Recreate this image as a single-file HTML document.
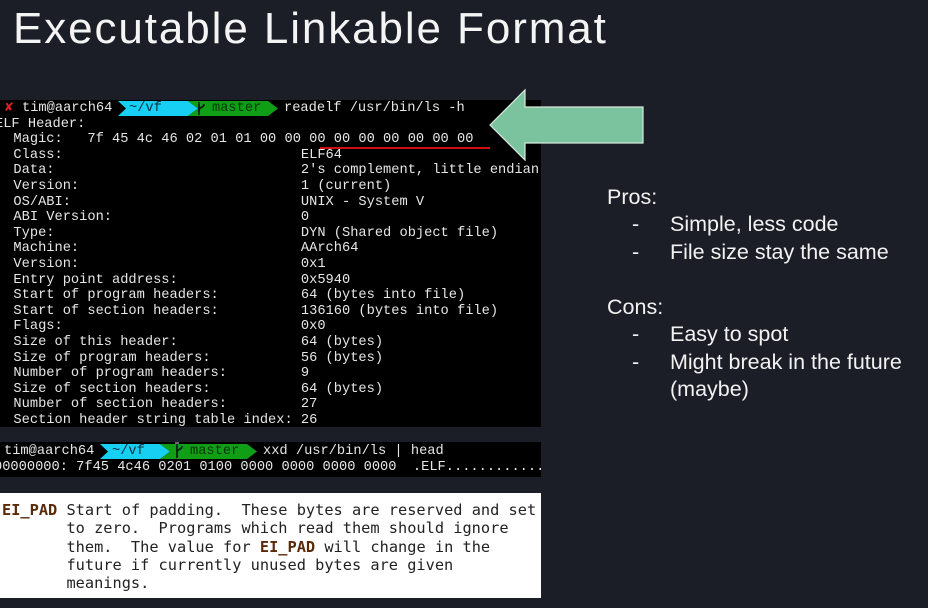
<!DOCTYPE html>
<html><head><meta charset="utf-8"><style>
*{margin:0;padding:0;box-sizing:border-box}
body{width:928px;height:608px;background:#1b1e27;position:relative;overflow:hidden;font-family:"Liberation Sans",sans-serif;color:#fff}
.title{position:absolute;left:13px;top:4px;font-size:44px;font-weight:normal;letter-spacing:1.9px;color:#f4f4f4;white-space:nowrap}
.term{position:absolute;background:#000;font-family:"Liberation Mono",monospace;font-size:13.7px;color:#e6e6e6;overflow:hidden}
.ln{position:absolute;left:0;height:15.6px;line-height:15.6px;white-space:pre}
.man{position:absolute;left:0;top:493px;width:541px;height:105px;background:#fff;font-family:"DejaVu Sans Mono",monospace;font-size:15.3px;color:#222;}
.man div{position:absolute;white-space:pre;line-height:18.3px}
b.r{color:#5a2a08}
.side{position:absolute;left:607px;font-size:21.5px;color:#f2f2f2;white-space:nowrap;line-height:27.5px}
</style></head><body>
<div class="title">Executable Linkable Format</div>

<div class="term" style="left:0;top:100px;width:541px;height:327px">
 <div style="position:absolute;left:118px;top:1px;width:80px;height:15px;background:#16cff2;clip-path:polygon(0 0,70px 0,80px 7.5px,70px 15px,0 15px,8px 7.5px)"></div>
 <div style="position:absolute;left:188px;top:1px;width:90px;height:15px;background:#0f9e16;clip-path:polygon(0 0,80px 0,90px 7.5px,80px 15px,0 15px,10px 7.5px)"></div>
 <div class="ln" style="top:1px;left:5px;color:#e02020">✘</div>
 <div class="ln" style="top:1px;left:22px">tim@aarch64</div>
 <div class="ln" style="top:1px;left:129px;color:#0a3040">~/vf</div>
 <div class="ln" style="top:1px;left:212px;color:#063a08">master</div>
 <div class="ln" style="top:1px;left:284px">readelf /usr/bin/ls -h</div>
 <svg style="position:absolute;left:196px;top:2px" width="10" height="13" viewBox="0 0 10 13"><path d="M3 0V13M3 8C3 5 8 6 8 2" stroke="#111" stroke-width="1.6" fill="none"/></svg>
 <div class="ln" style="top:16.6px;left:-5px">ELF Header:</div>
 <div class="ln" style="top:32.2px;left:-3px">  Magic:   7f 45 4c 46 02 01 01 00 00 00 00 00 00 00 00 00</div>
 <div style="position:absolute;left:320px;top:47px;width:170px;height:1.5px;background:#d01010"></div>
 <div class="ln" style="top:47.8px;left:-3px">  Class:                             ELF64
  Data:                              2's complement, little endian
  Version:                           1 (current)
  OS/ABI:                            UNIX - System V
  ABI Version:                       0
  Type:                              DYN (Shared object file)
  Machine:                           AArch64
  Version:                           0x1
  Entry point address:               0x5940
  Start of program headers:          64 (bytes into file)
  Start of section headers:          136160 (bytes into file)
  Flags:                             0x0
  Size of this header:               64 (bytes)
  Size of program headers:           56 (bytes)
  Number of program headers:         9
  Size of section headers:           64 (bytes)
  Number of section headers:         27
  Section header string table index: 26</div>
</div>

<svg style="position:absolute;left:488px;top:88px" width="158" height="74" viewBox="488 88 158 74"><path d="M490 125 L525 90 L525 107 L643 107 L643 143 L525 143 L525 160 Z" fill="#7bc39e" stroke="#d8e8de" stroke-width="1.2"/></svg>

<div class="term" style="left:0;top:442px;width:541px;height:35px">
 <div style="position:absolute;left:100px;top:2px;width:70px;height:15px;background:#16cff2;clip-path:polygon(0 0,60px 0,70px 7.5px,60px 15px,0 15px,8px 7.5px)"></div>
 <div style="position:absolute;left:160px;top:2px;width:97px;height:15px;background:#0f9e16;clip-path:polygon(0 0,87px 0,97px 7.5px,87px 15px,0 15px,10px 7.5px)"></div>
 <div class="ln" style="top:2px;left:4px">tim@aarch64</div>
 <div class="ln" style="top:2px;left:112px;color:#0a3040">~/vf</div>
 <div class="ln" style="top:2px;left:190px;color:#063a08">master</div>
 <div class="ln" style="top:2px;left:263px">xxd /usr/bin/ls | head</div>
 <svg style="position:absolute;left:174px;top:0px" width="10" height="16" viewBox="0 0 10 16"><path d="M3 2V16M3 10C3 7 8 8 8 4" stroke="#111" stroke-width="1.6" fill="none"/><path d="M1 1H5" stroke="#ccc"/></svg>
 <div class="ln" style="top:17.6px;left:-6px">00000000: 7f45 4c46 0201 0100 0000 0000 0000 0000  .ELF............</div>
</div>

<div class="man">
 <div style="left:2px;top:8px"><b class="r">EI_PAD</b> Start of padding.  These bytes are reserved and set
       to zero.  Programs which read them should ignore
       them.  The value for <b class="r">EI_PAD</b> will change in the
       future if currently unused bytes are given
       meanings.</div>
</div>

<div class="side" style="top:184px">Pros:</div>
<div class="side" style="top:211px;left:632px">-</div><div class="side" style="top:211px;left:670px">Simple, less code</div>
<div class="side" style="top:238.5px;left:632px">-</div><div class="side" style="top:238.5px;left:670px">File size stay the same</div>
<div class="side" style="top:294px">Cons:</div>
<div class="side" style="top:321px;left:632px">-</div><div class="side" style="top:321px;left:670px">Easy to spot</div>
<div class="side" style="top:348.5px;left:632px">-</div><div class="side" style="top:348.5px;left:670px">Might break in the future</div>
<div class="side" style="top:376px;left:670px">(maybe)</div>
</body></html>
